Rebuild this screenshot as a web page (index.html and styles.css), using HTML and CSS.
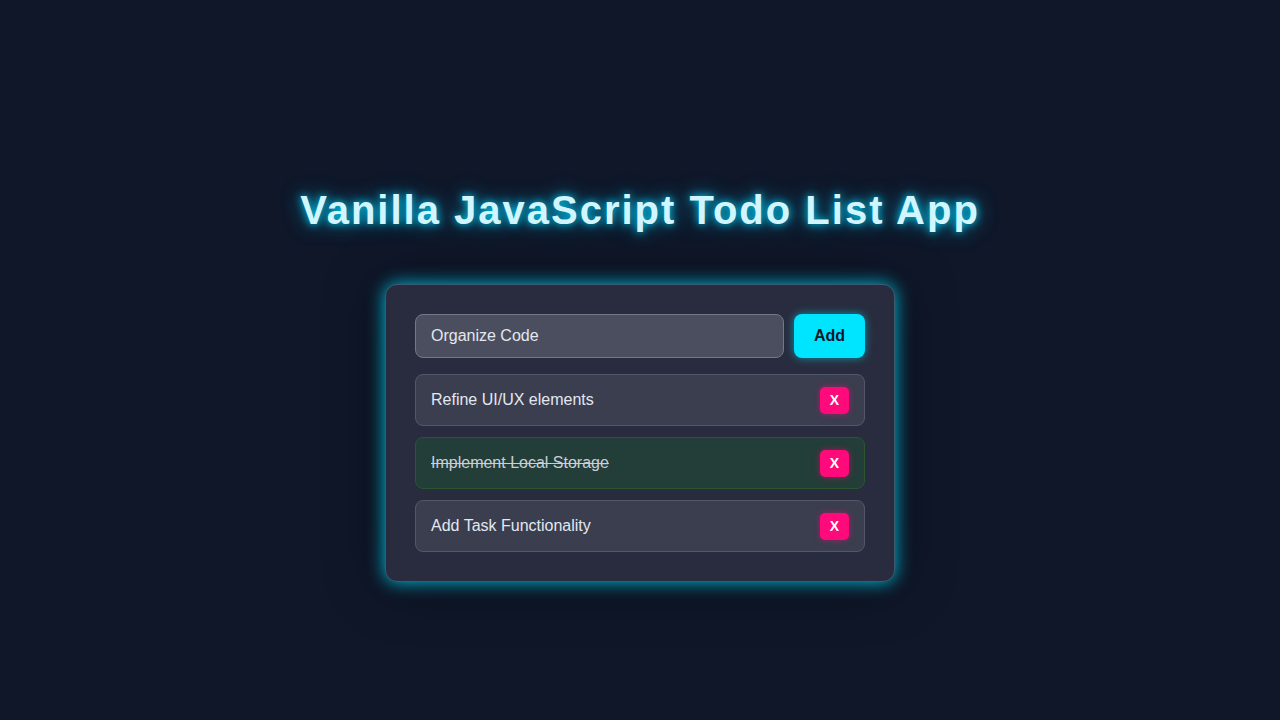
FILE: index.html
```html
<!DOCTYPE html>
<html lang="en">
<head>
<meta charset="UTF-8">
<title>Vanilla JavaScript Todo List App</title>
<link rel="stylesheet" href="styles.css">
</head>
<body>
  <main class="app">
    <h1 class="title">Vanilla JavaScript Todo List App</h1>
    <section class="card">
      <form class="add-row">
        <input class="task-input" type="text" value="Organize Code">
        <button class="add-btn" type="button">Add</button>
      </form>
      <ul class="todo-list">
        <li class="todo-item">
          <span class="todo-text">Refine UI/UX elements</span>
          <button class="del-btn" type="button">X</button>
        </li>
        <li class="todo-item done">
          <span class="todo-text">Implement Local Storage</span>
          <button class="del-btn" type="button">X</button>
        </li>
        <li class="todo-item">
          <span class="todo-text">Add Task Functionality</span>
          <button class="del-btn" type="button">X</button>
        </li>
      </ul>
    </section>
  </main>
</body>
</html>
```

FILE: styles.css
```css
* { box-sizing: border-box; }

html, body {
  margin: 0;
  height: 100%;
}

body {
  background: #0f1729;
  font-family: "Liberation Sans", Arial, sans-serif;
  color: #e2e8f0;
}

.app {
  height: 100%;
  display: flex;
  flex-direction: column;
  align-items: center;
  padding-top: 186px;
}

.title {
  margin: 0 0 50px;
  font-size: 40px;
  line-height: 48px;
  font-weight: bold;
  letter-spacing: 2px;
  color: #d2f6ff;
  text-shadow: 0 0 8px #00d8ff, 0 0 20px rgba(0, 200, 255, 0.65);
}

.card {
  width: 510px;
  padding: 29px;
  background: #282c3e;
  border: 1px solid #3a5a70;
  border-radius: 12px;
  box-shadow: 0 0 18px rgba(0, 220, 255, 0.85), 0 0 60px rgba(0, 0, 0, 0.45);
}

.add-row {
  display: flex;
  gap: 10px;
  margin: 0 0 16px;
}

.task-input {
  flex: 1;
  height: 44px;
  padding: 0 15px;
  font-family: inherit;
  font-size: 16px;
  color: #e2e8f0;
  background: #4a4e5e;
  border: 1px solid #737889;
  border-radius: 8px;
  outline: none;
}

.add-btn {
  width: 71px;
  height: 44px;
  font-family: inherit;
  font-size: 16px;
  font-weight: bold;
  color: #111827;
  background: #00e5ff;
  border: none;
  border-radius: 8px;
  box-shadow: 0 0 8px rgba(0, 229, 255, 0.55);
}

.todo-list {
  list-style: none;
  margin: 0;
  padding: 0;
  display: flex;
  flex-direction: column;
  gap: 11px;
}

.todo-item {
  display: flex;
  align-items: center;
  justify-content: space-between;
  height: 52px;
  padding: 0 15px;
  background: #3a3e4f;
  border: 1px solid #535869;
  border-radius: 8px;
  font-size: 16px;
}

.todo-item.done {
  background: #233d38;
  border-color: #27562f;
}

.todo-item.done .todo-text {
  text-decoration: line-through;
  color: #c8cfd8;
}

.del-btn {
  width: 29px;
  height: 27px;
  padding: 0;
  font-family: inherit;
  font-size: 14px;
  font-weight: bold;
  color: #ffffff;
  background: #ff0a7a;
  border: none;
  border-radius: 5px;
  box-shadow: 0 0 6px rgba(255, 10, 122, 0.5);
}
```
